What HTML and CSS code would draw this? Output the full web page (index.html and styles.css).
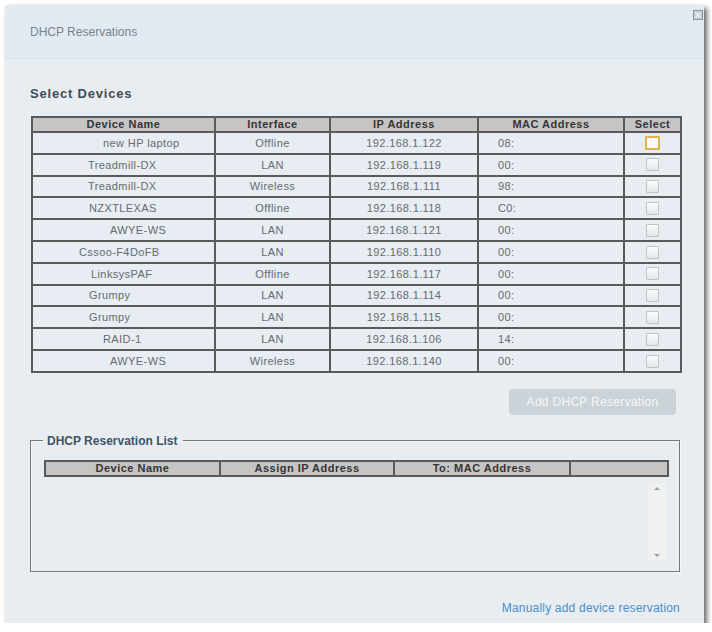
FILE: index.html
```html
<!DOCTYPE html>
<html>
<head>
<meta charset="utf-8">
<title>DHCP Reservations</title>
<link rel="stylesheet" href="styles.css">
</head>
<body>
<div class="dialog">
  <div class="dlg-head">DHCP Reservations</div>
  <span class="close-btn">
    <svg width="10" height="10" viewBox="0 0 10 10">
      <rect x="0.5" y="0.5" width="9" height="9" fill="#c9d0d5" stroke="#8b949a"/>
      <path d="M2.6 2.6 L7.4 7.4 M7.4 2.6 L2.6 7.4" stroke="#f4f6f8" stroke-width="1.3"/>
    </svg>
  </span>
  <div class="dlg-body">
    <div class="section-title">Select Devices</div>
    <table class="grid devices">
      <colgroup>
        <col class="c-name"><col class="c-if"><col class="c-ip"><col class="c-mac"><col class="c-sel">
      </colgroup>
      <thead>
        <tr><th>Device Name</th><th>Interface</th><th>IP Address</th><th>MAC Address</th><th>Select</th></tr>
      </thead>
      <tbody>
        <tr><td class="name p70">new HP laptop</td><td>Offline</td><td>192.168.1.122</td><td class="mac">08:</td><td><span class="cb focus"></span></td></tr>
        <tr><td class="name p55">Treadmill-DX</td><td>LAN</td><td>192.168.1.119</td><td class="mac">00:</td><td><span class="cb"></span></td></tr>
        <tr><td class="name p55">Treadmill-DX</td><td>Wireless</td><td>192.168.1.111</td><td class="mac">98:</td><td><span class="cb"></span></td></tr>
        <tr><td class="name p56">NZXTLEXAS</td><td>Offline</td><td>192.168.1.118</td><td class="mac">C0:</td><td><span class="cb"></span></td></tr>
        <tr><td class="name p77">AWYE-WS</td><td>LAN</td><td>192.168.1.121</td><td class="mac">00:</td><td><span class="cb"></span></td></tr>
        <tr><td class="name p46">Cssoo-F4DoFB</td><td>LAN</td><td>192.168.1.110</td><td class="mac">00:</td><td><span class="cb"></span></td></tr>
        <tr><td class="name p58">LinksysPAF</td><td>Offline</td><td>192.168.1.117</td><td class="mac">00:</td><td><span class="cb"></span></td></tr>
        <tr><td class="name p56">Grumpy</td><td>LAN</td><td>192.168.1.114</td><td class="mac">00:</td><td><span class="cb"></span></td></tr>
        <tr><td class="name p56">Grumpy</td><td>LAN</td><td>192.168.1.115</td><td class="mac">00:</td><td><span class="cb"></span></td></tr>
        <tr><td class="name p70">RAID-1</td><td>LAN</td><td>192.168.1.106</td><td class="mac">14:</td><td><span class="cb"></span></td></tr>
        <tr><td class="name p77">AWYE-WS</td><td>Wireless</td><td>192.168.1.140</td><td class="mac">00:</td><td><span class="cb"></span></td></tr>
      </tbody>
    </table>
    <div class="btn-row">
      <button class="btn-add" type="button">Add DHCP Reservation</button>
    </div>
    <fieldset class="res-list">
      <legend>DHCP Reservation List</legend>
      <table class="grid reservations">
        <colgroup>
          <col class="r-name"><col class="r-ip"><col class="r-mac"><col class="r-act">
        </colgroup>
        <thead>
          <tr><th>Device Name</th><th>Assign IP Address</th><th>To: MAC Address</th><th></th></tr>
        </thead>
      </table>
      <div class="list-area">
        <div class="scrollbar">
          <span class="arrow up"></span>
          <span class="arrow down"></span>
        </div>
      </div>
    </fieldset>
    <div class="link-row">
      <a class="manual-link" href="#">Manually add device reservation</a>
    </div>
  </div>
</div>
</body>
</html>
```
FILE: styles.css
```css
html, body {
  margin: 0;
  padding: 0;
  background: #ffffff;
}

body {
  font-family: "Liberation Sans", Arial, sans-serif;
}

.dialog {
  position: relative;
  margin: 5px 0 0 5px;
  width: 699px;
  height: 618px;
  background: #e8edf1;
  box-shadow: 3px 3px 5px rgba(0, 0, 0, 0.6);
}

.dlg-head {
  height: 53px;
  display: flex;
  align-items: center;
  padding-left: 25px;
  background: #e2eaf1;
  border-bottom: 1px solid #dbe3e9;
  font-size: 12px;
  color: #75838f;
}

.close-btn {
  position: absolute;
  top: 5px;
  right: 1px;
  width: 10px;
  height: 10px;
  line-height: 0;
}

.dlg-body {
  padding: 27px 23px 0 25px;
}

.section-title {
  font-size: 13px;
  font-weight: bold;
  letter-spacing: 0.8px;
  line-height: 16px;
  color: #3e4c58;
  margin-bottom: 14px;
}

.grid {
  border-collapse: collapse;
  table-layout: fixed;
}

.grid th {
  height: 13px;
  padding: 0;
  background: #c5c5c5;
  border: 2px solid #5a5a5a;
  font-size: 11px;
  font-weight: bold;
  letter-spacing: 0.5px;
  line-height: 13px;
  color: #363636;
  text-align: center;
}

.devices {
  width: 649px;
  margin-left: 1px;
}

.devices td {
  height: 19.8px;
  padding: 0;
  background: #e7edf2;
  border: 2px solid #5a5a5a;
  font-size: 11px;
  letter-spacing: 0.4px;
  color: #656b70;
  text-align: center;
  vertical-align: middle;
}

.c-name { width: 183px; }
.c-if { width: 115px; }
.c-ip { width: 148px; }
.c-mac { width: 146px; }
.c-sel { width: 57px; }

.devices td.name { text-align: left; }
.devices td.p46 { padding-left: 46px; }
.devices td.p55 { padding-left: 55px; }
.devices td.p56 { padding-left: 56px; }
.devices td.p58 { padding-left: 58px; }
.devices td.p70 { padding-left: 70px; }
.devices td.p77 { padding-left: 77px; }

.devices td.mac {
  text-align: left;
  padding-left: 19px;
}

.cb {
  display: inline-block;
  vertical-align: middle;
  width: 11px;
  height: 11px;
  border: 1px solid #c0c4c7;
  border-radius: 1px;
  background: linear-gradient(#fbfbfb, #e4e7e9);
}

.cb.focus {
  width: 11px;
  height: 10px;
  border: 2px solid #e2b451;
  background: #fbfbfb;
}

.btn-row {
  display: flex;
  justify-content: flex-end;
  margin-top: 16px;
  padding-right: 5px;
}

.btn-add {
  width: 167px;
  height: 26px;
  border: none;
  border-radius: 4px;
  background: #cbd3d9;
  color: #f3f6f8;
  font-family: "Liberation Sans", Arial, sans-serif;
  font-size: 12px;
  letter-spacing: 0.3px;
  padding: 0;
}

.res-list {
  margin: 19px 0 0 0;
  width: 650px;
  box-sizing: border-box;
  padding: 12px 12px 10px 12px;
  border: 1px solid #73797e;
  box-shadow: inset 1px 1px 0 #f4f7f9, 1px 1px 0 #f4f7f9;
  min-width: 0;
}

.res-list legend {
  padding: 0 6px 0 4px;
  font-size: 12px;
  font-weight: bold;
  line-height: 14px;
  color: #405468;
}

.reservations {
  width: 623px;
  margin-left: 1px;
}

.r-name { width: 175px; }
.r-ip { width: 174px; }
.r-mac { width: 176px; }
.r-act { width: 98px; }

.list-area {
  display: flex;
  justify-content: flex-end;
  margin-top: 6px;
  padding-right: 1px;
}

.scrollbar {
  position: relative;
  width: 18px;
  height: 78px;
  background: #f1f1f0;
  border-radius: 2px;
}

.arrow {
  position: absolute;
  left: 6px;
  width: 0;
  height: 0;
  border-left: 3px solid transparent;
  border-right: 3px solid transparent;
}

.arrow.up {
  top: 4px;
  border-bottom: 3px solid #9aa0a4;
}

.arrow.down {
  bottom: 4px;
  border-top: 3px solid #9aa0a4;
}

.link-row {
  display: flex;
  justify-content: flex-end;
  margin-top: 29px;
  padding-right: 1px;
}

.manual-link {
  font-size: 12px;
  letter-spacing: 0.2px;
  line-height: 14px;
  color: #4a8fc9;
  text-decoration: none;
}
```
